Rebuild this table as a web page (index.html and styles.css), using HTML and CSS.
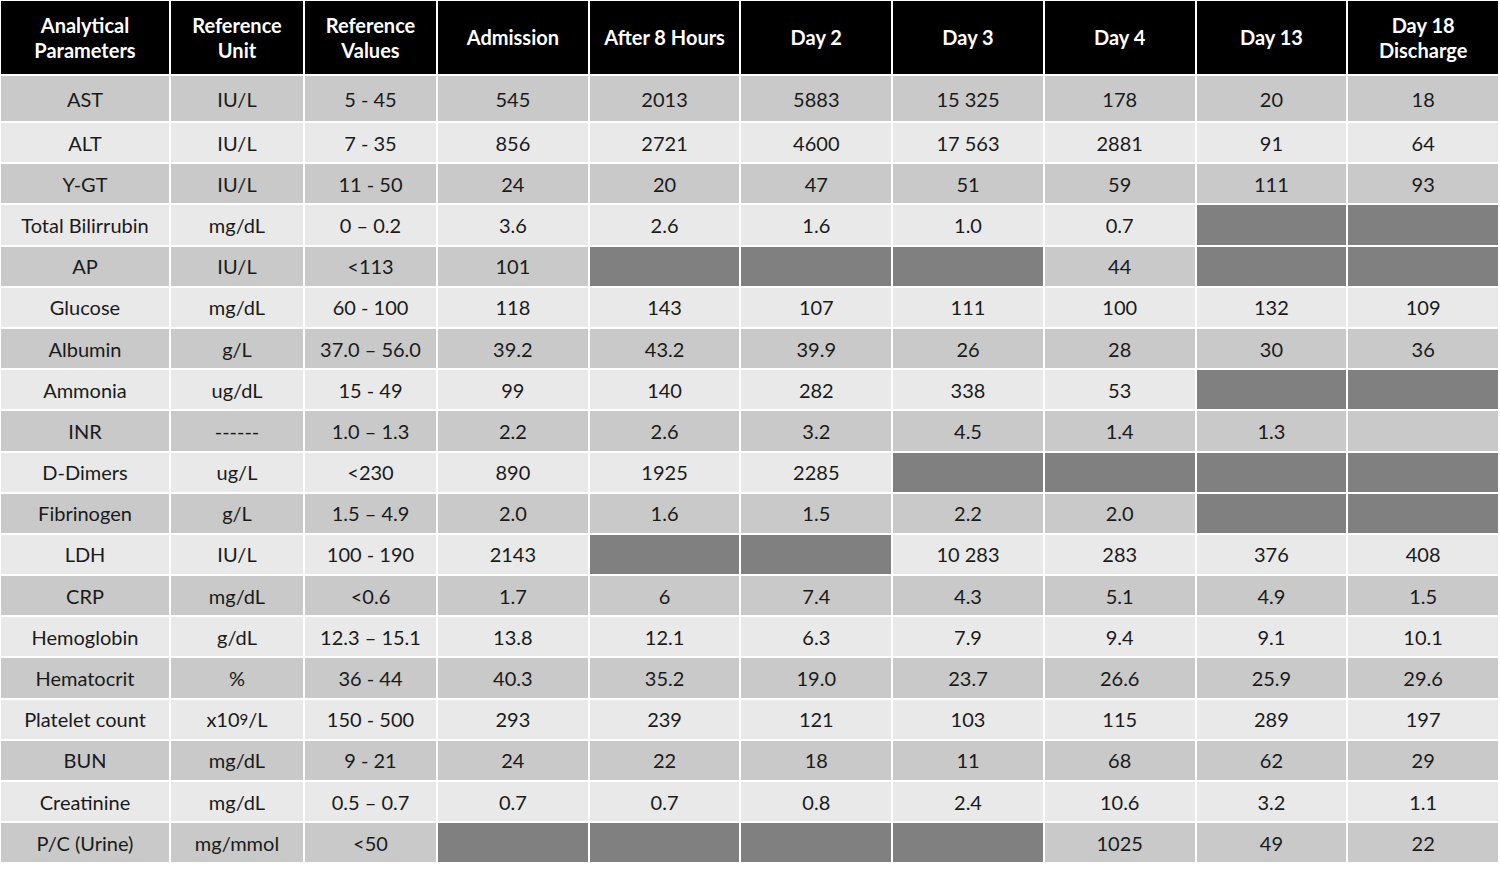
FILE: index.html
```html
<!DOCTYPE html>
<html lang="en">
<head>
<meta charset="utf-8">
<title>Laboratory parameters</title>
<link rel="stylesheet" href="styles.css">
</head>
<body>
<div class="table">
  <div class="row head">
    <div class="cell">Analytical<br>Parameters</div>
    <div class="cell">Reference<br>Unit</div>
    <div class="cell">Reference<br>Values</div>
    <div class="cell">Admission</div>
    <div class="cell">After 8 Hours</div>
    <div class="cell">Day 2</div>
    <div class="cell">Day 3</div>
    <div class="cell">Day 4</div>
    <div class="cell">Day 13</div>
    <div class="cell">Day 18<br>Discharge</div>
  </div>
  <div class="row dark">
    <div class="cell">AST</div><div class="cell">IU/L</div><div class="cell">5 - 45</div>
    <div class="cell">545</div><div class="cell">2013</div><div class="cell">5883</div><div class="cell">15 325</div><div class="cell">178</div><div class="cell">20</div><div class="cell">18</div>
  </div>
  <div class="row light">
    <div class="cell">ALT</div><div class="cell">IU/L</div><div class="cell">7 - 35</div>
    <div class="cell">856</div><div class="cell">2721</div><div class="cell">4600</div><div class="cell">17 563</div><div class="cell">2881</div><div class="cell">91</div><div class="cell">64</div>
  </div>
  <div class="row dark">
    <div class="cell">Y-GT</div><div class="cell">IU/L</div><div class="cell">11 - 50</div>
    <div class="cell">24</div><div class="cell">20</div><div class="cell">47</div><div class="cell">51</div><div class="cell">59</div><div class="cell">111</div><div class="cell">93</div>
  </div>
  <div class="row light">
    <div class="cell">Total Bilirrubin</div><div class="cell">mg/dL</div><div class="cell">0 – 0.2</div>
    <div class="cell">3.6</div><div class="cell">2.6</div><div class="cell">1.6</div><div class="cell">1.0</div><div class="cell">0.7</div><div class="cell na"></div><div class="cell na"></div>
  </div>
  <div class="row dark">
    <div class="cell">AP</div><div class="cell">IU/L</div><div class="cell">&lt;113</div>
    <div class="cell">101</div><div class="cell na"></div><div class="cell na"></div><div class="cell na"></div><div class="cell">44</div><div class="cell na"></div><div class="cell na"></div>
  </div>
  <div class="row light">
    <div class="cell">Glucose</div><div class="cell">mg/dL</div><div class="cell">60 - 100</div>
    <div class="cell">118</div><div class="cell">143</div><div class="cell">107</div><div class="cell">111</div><div class="cell">100</div><div class="cell">132</div><div class="cell">109</div>
  </div>
  <div class="row dark">
    <div class="cell">Albumin</div><div class="cell">g/L</div><div class="cell">37.0 – 56.0</div>
    <div class="cell">39.2</div><div class="cell">43.2</div><div class="cell">39.9</div><div class="cell">26</div><div class="cell">28</div><div class="cell">30</div><div class="cell">36</div>
  </div>
  <div class="row light">
    <div class="cell">Ammonia</div><div class="cell">ug/dL</div><div class="cell">15 - 49</div>
    <div class="cell">99</div><div class="cell">140</div><div class="cell">282</div><div class="cell">338</div><div class="cell">53</div><div class="cell na"></div><div class="cell na"></div>
  </div>
  <div class="row dark">
    <div class="cell">INR</div><div class="cell">------</div><div class="cell">1.0 – 1.3</div>
    <div class="cell">2.2</div><div class="cell">2.6</div><div class="cell">3.2</div><div class="cell">4.5</div><div class="cell">1.4</div><div class="cell">1.3</div><div class="cell"></div>
  </div>
  <div class="row light">
    <div class="cell">D-Dimers</div><div class="cell">ug/L</div><div class="cell">&lt;230</div>
    <div class="cell">890</div><div class="cell">1925</div><div class="cell">2285</div><div class="cell na"></div><div class="cell na"></div><div class="cell na"></div><div class="cell na"></div>
  </div>
  <div class="row dark">
    <div class="cell">Fibrinogen</div><div class="cell">g/L</div><div class="cell">1.5 – 4.9</div>
    <div class="cell">2.0</div><div class="cell">1.6</div><div class="cell">1.5</div><div class="cell">2.2</div><div class="cell">2.0</div><div class="cell na"></div><div class="cell na"></div>
  </div>
  <div class="row light">
    <div class="cell">LDH</div><div class="cell">IU/L</div><div class="cell">100 - 190</div>
    <div class="cell">2143</div><div class="cell na"></div><div class="cell na"></div><div class="cell">10 283</div><div class="cell">283</div><div class="cell">376</div><div class="cell">408</div>
  </div>
  <div class="row dark">
    <div class="cell">CRP</div><div class="cell">mg/dL</div><div class="cell">&lt;0.6</div>
    <div class="cell">1.7</div><div class="cell">6</div><div class="cell">7.4</div><div class="cell">4.3</div><div class="cell">5.1</div><div class="cell">4.9</div><div class="cell">1.5</div>
  </div>
  <div class="row light">
    <div class="cell">Hemoglobin</div><div class="cell">g/dL</div><div class="cell">12.3 – 15.1</div>
    <div class="cell">13.8</div><div class="cell">12.1</div><div class="cell">6.3</div><div class="cell">7.9</div><div class="cell">9.4</div><div class="cell">9.1</div><div class="cell">10.1</div>
  </div>
  <div class="row dark">
    <div class="cell">Hematocrit</div><div class="cell">%</div><div class="cell">36 - 44</div>
    <div class="cell">40.3</div><div class="cell">35.2</div><div class="cell">19.0</div><div class="cell">23.7</div><div class="cell">26.6</div><div class="cell">25.9</div><div class="cell">29.6</div>
  </div>
  <div class="row light">
    <div class="cell">Platelet count</div><div class="cell">x10<sup>9</sup>/L</div><div class="cell">150 - 500</div>
    <div class="cell">293</div><div class="cell">239</div><div class="cell">121</div><div class="cell">103</div><div class="cell">115</div><div class="cell">289</div><div class="cell">197</div>
  </div>
  <div class="row dark">
    <div class="cell">BUN</div><div class="cell">mg/dL</div><div class="cell">9 - 21</div>
    <div class="cell">24</div><div class="cell">22</div><div class="cell">18</div><div class="cell">11</div><div class="cell">68</div><div class="cell">62</div><div class="cell">29</div>
  </div>
  <div class="row light">
    <div class="cell">Creatinine</div><div class="cell">mg/dL</div><div class="cell">0.5 – 0.7</div>
    <div class="cell">0.7</div><div class="cell">0.7</div><div class="cell">0.8</div><div class="cell">2.4</div><div class="cell">10.6</div><div class="cell">3.2</div><div class="cell">1.1</div>
  </div>
  <div class="row dark">
    <div class="cell">P/C (Urine)</div><div class="cell">mg/mmol</div><div class="cell">&lt;50</div>
    <div class="cell na"></div><div class="cell na"></div><div class="cell na"></div><div class="cell na"></div><div class="cell">1025</div><div class="cell">49</div><div class="cell">22</div>
  </div>
</div>
</body>
</html>
```

FILE: styles.css
```css
html, body {
  margin: 0;
  padding: 0;
  background: #ffffff;
}

body {
  font-family: Lato, "Open Sans", "Liberation Sans", sans-serif;
  color: #1a1a1a;
}

.table {
  display: grid;
  grid-template-columns: 168px 132px 131px repeat(7, 1fr);
  grid-template-rows: 73px 45px repeat(18, 39.2px);
  gap: 2px;
  width: 1497px;
  margin: 1px 0 0 1px;
}

.row {
  display: contents;
}

.cell {
  display: flex;
  align-items: center;
  justify-content: center;
  text-align: center;
  font-size: 20px;
  line-height: 1;
  white-space: nowrap;
}

.head .cell {
  background: #000000;
  color: #ffffff;
  font-weight: 700;
  font-size: 20px;
  line-height: 25px;
}

.dark .cell {
  background: #c9c9c9;
}

.light .cell {
  background: #e9e9e9;
}

.row .cell.na {
  background: #808080;
}

sup {
  font-size: 0.75em;
  line-height: 0;
  vertical-align: 0.5em;
}
```
